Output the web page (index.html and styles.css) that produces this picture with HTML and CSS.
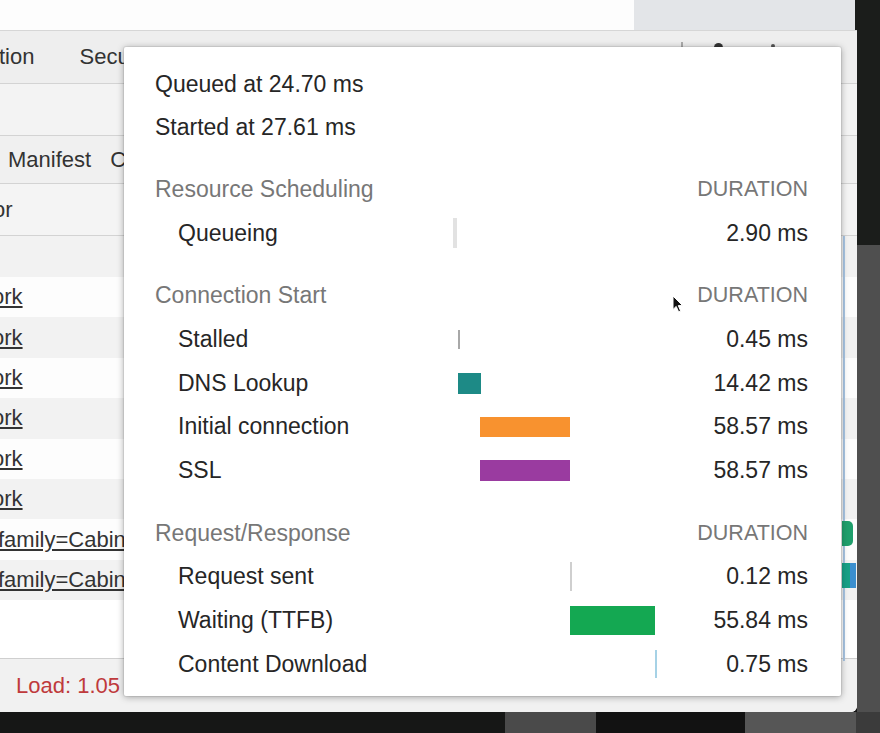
FILE: index.html
```html
<!DOCTYPE html>
<html lang="en">
  <head>
    <meta charset="UTF-8" />
    <meta name="viewport" content="width=device-width, initial-scale=1.0" />
    <link rel="stylesheet" href="styles.css">
    <title>Timing</title>
  </head>

  <body>
    <div class="screen">
      <div class="page-top">
        <div class="page-top__white"></div>
        <div class="page-top__grey"></div>
        <div class="page-top__edge"></div>
      </div>
      <div class="side"></div>

      <div class="devtools">
        <div class="dt-tabs">
          <span class="dt-tab dt-tab--cut">tion</span>
          <span class="dt-tab dt-tab--second">Security</span>
          <div class="dt-tools">
            <span class="dt-tools__divider"></span>
            <span class="dt-tools__dock"></span>
            <span class="dt-tools__menu"><i></i><i></i><i></i></span>
          </div>
        </div>
        <div class="dt-toolbar"></div>
        <div class="dt-subtabs">
          <span>Manifest</span>
          <span class="dt-subtabs__next">Clear storage</span>
        </div>
        <div class="dt-filter"><span class="dt-cut">or</span></div>
        <div class="dt-header"></div>
        <ul class="dt-rows">
          <li class="dt-row"><span class="dt-link">ork</span></li>
          <li class="dt-row"><span class="dt-link">ork</span></li>
          <li class="dt-row"><span class="dt-link">ork</span></li>
          <li class="dt-row"><span class="dt-link">ork</span></li>
          <li class="dt-row"><span class="dt-link">ork</span></li>
          <li class="dt-row"><span class="dt-link">ork</span></li>
          <li class="dt-row"><span class="dt-link dt-link--font">family=Cabin</span></li>
          <li class="dt-row"><span class="dt-link dt-link--font">family=Cabin</span></li>
        </ul>
        <div class="dt-empty"></div>
        <div class="dt-status">Load: 1.05 s</div>

        <span class="wf-line"></span>
        <span class="wf-bar wf-bar--green"></span>
        <span class="wf-bar wf-bar--teal"></span>
      </div>

      <div class="floor"></div>

      <div class="timing-popup">
        <div class="t-meta">Queued at 24.70 ms</div>
        <div class="t-meta">Started at 27.61 ms</div>

        <div class="t-row t-head">
          <span>Resource Scheduling</span>
          <span class="t-head__dur">DURATION</span>
        </div>
        <div class="t-row">
          <span class="t-label">Queueing</span>
          <span class="t-track"><i class="t-bar t-bar--queue" style="margin-left: 0px; width: 4px; height: 30px"></i></span>
          <span class="t-dur">2.90 ms</span>
        </div>

        <div class="t-row t-head">
          <span>Connection Start</span>
          <span class="t-head__dur">DURATION</span>
        </div>
        <div class="t-row">
          <span class="t-label">Stalled</span>
          <span class="t-track"><i class="t-bar t-bar--stalled" style="margin-left: 5px; width: 2px; height: 19px"></i></span>
          <span class="t-dur">0.45 ms</span>
        </div>
        <div class="t-row">
          <span class="t-label">DNS Lookup</span>
          <span class="t-track"><i class="t-bar t-bar--dns" style="margin-left: 5px; width: 23px; height: 21px"></i></span>
          <span class="t-dur">14.42 ms</span>
        </div>
        <div class="t-row">
          <span class="t-label">Initial connection</span>
          <span class="t-track"><i class="t-bar t-bar--connect" style="margin-left: 27px; width: 90px; height: 20px"></i></span>
          <span class="t-dur">58.57 ms</span>
        </div>
        <div class="t-row">
          <span class="t-label">SSL</span>
          <span class="t-track"><i class="t-bar t-bar--ssl" style="margin-left: 27px; width: 90px; height: 21px"></i></span>
          <span class="t-dur">58.57 ms</span>
        </div>

        <div class="t-row t-head">
          <span>Request/Response</span>
          <span class="t-head__dur">DURATION</span>
        </div>
        <div class="t-row">
          <span class="t-label">Request sent</span>
          <span class="t-track"><i class="t-bar t-bar--sent" style="margin-left: 117px; width: 2px; height: 29px"></i></span>
          <span class="t-dur">0.12 ms</span>
        </div>
        <div class="t-row">
          <span class="t-label">Waiting (TTFB)</span>
          <span class="t-track"><i class="t-bar t-bar--wait" style="margin-left: 117px; width: 85px; height: 29px"></i></span>
          <span class="t-dur">55.84 ms</span>
        </div>
        <div class="t-row">
          <span class="t-label">Content Download</span>
          <span class="t-track"><i class="t-bar t-bar--download" style="margin-left: 202px; width: 2px; height: 28px"></i></span>
          <span class="t-dur">0.75 ms</span>
        </div>
      </div>

      <svg class="cursor" width="12" height="18" viewBox="0 0 12 18">
        <path d="M1 1 L1 14.5 L4.2 11.4 L6.6 16.8 L8.6 15.9 L6.3 10.6 L10.6 10.6 Z" fill="#111" stroke="#fff" stroke-width="1" stroke-linejoin="round" />
      </svg>
    </div>
  </body>
</html>
```

FILE: styles.css
```css
body {
  margin: 0;
  background-color: #161616;
  font-family: "Liberation Sans", Arial, sans-serif;
}

.screen {
  position: relative;
  width: 880px;
  height: 733px;
  overflow: hidden;
  display: grid;
  grid-template-columns: 857px 23px;
  grid-template-rows: 30px 682px 21px;
}

/* page behind devtools */
.page-top {
  display: flex;
}
.page-top__white {
  width: 634px;
  background-color: #fdfdfd;
}
.page-top__grey {
  flex: 1;
  background-color: #e3e5e8;
}
.page-top__edge {
  width: 2px;
  background-color: #1b1d1b;
}
.side {
  grid-column: 2;
  grid-row: 1 / 3;
  background: linear-gradient(#1b1d1b 0 245px, #4f4f4f 245px);
}
.floor {
  grid-column: 1 / 3;
  grid-row: 3;
  background: linear-gradient(
    to right,
    #161716 0 505px,
    #4a4a4a 505px 596px,
    #121212 596px 745px,
    #565656 745px 856px,
    #3b3b3b 856px
  );
}

/* devtools panel */
.devtools {
  grid-column: 1;
  grid-row: 2;
  position: relative;
  display: flex;
  flex-direction: column;
  overflow: hidden;
  background-color: #fff;
  border-top: 1px solid #d6d6d6;
  border-bottom-right-radius: 6px;
  color: #333;
  font-size: 22px;
  white-space: nowrap;
}
.dt-tabs {
  height: 52px;
  flex: none;
  display: flex;
  align-items: center;
  background-color: #eeeeee;
  border-bottom: 1px solid #d3d3d3;
}
.dt-tab--cut {
  margin-left: -1px;
}
.dt-tab--second {
  margin-left: 45px;
}
.dt-tools {
  margin-left: auto;
  margin-right: 82px;
  align-self: flex-start;
  padding-top: 11px;
  display: flex;
  align-items: flex-start;
}
.dt-tools__divider {
  width: 2px;
  height: 16px;
  background-color: #aaa;
}
.dt-tools__dock {
  margin-left: 31px;
  width: 9px;
  height: 9px;
  margin-top: 1px;
  border-radius: 50%;
  background-color: #333;
}
.dt-tools__menu {
  margin-left: 48px;
  display: flex;
  flex-direction: column;
  gap: 3px;
  padding-top: 2px;
}
.dt-tools__menu i {
  width: 4px;
  height: 4px;
  border-radius: 50%;
  background-color: #555;
}
.dt-toolbar {
  height: 51px;
  flex: none;
  background-color: #f3f3f3;
  border-bottom: 1px solid #d3d3d3;
}
.dt-subtabs {
  height: 47px;
  flex: none;
  display: flex;
  align-items: center;
  padding-left: 8px;
  background-color: #f0f0f0;
  border-bottom: 1px solid #d3d3d3;
}
.dt-subtabs__next {
  margin-left: 19px;
}
.dt-filter {
  height: 51px;
  flex: none;
  display: flex;
  align-items: center;
  background-color: #f4f4f4;
  border-bottom: 1px solid #d3d3d3;
}
.dt-cut {
  margin-left: -7px;
}
.dt-header {
  height: 41px;
  flex: none;
  background-color: #f2f2f2;
}
.dt-rows {
  list-style: none;
  margin: 0;
  padding: 0;
  flex: none;
}
.dt-row {
  height: 40.4px;
  display: flex;
  align-items: center;
  background-color: #fdfdfd;
}
.dt-row:nth-child(even) {
  background-color: #f2f2f2;
}
.dt-link {
  margin-left: -8px;
  text-decoration: underline;
  text-underline-offset: 2px;
}
.dt-link--font {
  margin-left: -2px;
}
.dt-empty {
  flex: 1;
}
.dt-status {
  height: 53px;
  flex: none;
  display: flex;
  align-items: center;
  padding-left: 16px;
  background-color: #f1f1f1;
  border-top: 1px solid #cfcfcf;
  color: #bf3a3c;
}

/* waterfall marks at the right edge */
.wf-line {
  position: absolute;
  left: 843px;
  top: 205px;
  width: 2px;
  height: 425px;
  background-color: #a9c6e4;
}
.wf-bar {
  position: absolute;
  left: 842px;
  height: 25px;
}
.wf-bar--green {
  top: 490px;
  width: 11px;
  border-radius: 0 5px 5px 0;
  background-color: #1f9f6c;
}
.wf-bar--teal {
  top: 532px;
  width: 14px;
  background: linear-gradient(to right, #17a086 0 8px, #3b8fcf 8px);
}

/* timing popup */
.timing-popup {
  position: absolute;
  left: 124px;
  top: 47px;
  width: 717px;
  box-sizing: border-box;
  padding: 15.5px 33px 10px 31px;
  background-color: #fff;
  border-radius: 2px;
  box-shadow: 0 1px 7px rgba(0, 0, 0, 0.35), 0 0 0 1px rgba(0, 0, 0, 0.06);
  color: #262626;
  font-size: 23px;
  white-space: nowrap;
}
.t-meta {
  height: 43px;
  display: flex;
  align-items: center;
}
.t-row {
  height: 43.7px;
  display: flex;
  align-items: center;
}
.t-head {
  margin-top: 19px;
  justify-content: space-between;
  color: #777;
}
.t-head__dur {
  font-size: 21.5px;
}
.t-label {
  width: 275px;
  padding-left: 23px;
  flex: none;
}
.t-track {
  flex: 1;
  display: flex;
  align-items: center;
}
.t-bar {
  display: block;
  flex: none;
}
.t-bar--queue {
  background-color: #e2e2e2;
}
.t-bar--stalled {
  background-color: #a8a8a8;
}
.t-bar--dns {
  background-color: #1d8a86;
}
.t-bar--connect {
  background-color: #f8922f;
}
.t-bar--ssl {
  background-color: #9a3ba0;
}
.t-bar--sent {
  background-color: #cfcfcf;
}
.t-bar--wait {
  background-color: #14a852;
}
.t-bar--download {
  background-color: #a6d2e6;
}
.t-dur {
  text-align: right;
}

.cursor {
  position: absolute;
  left: 672px;
  top: 295px;
}
```
